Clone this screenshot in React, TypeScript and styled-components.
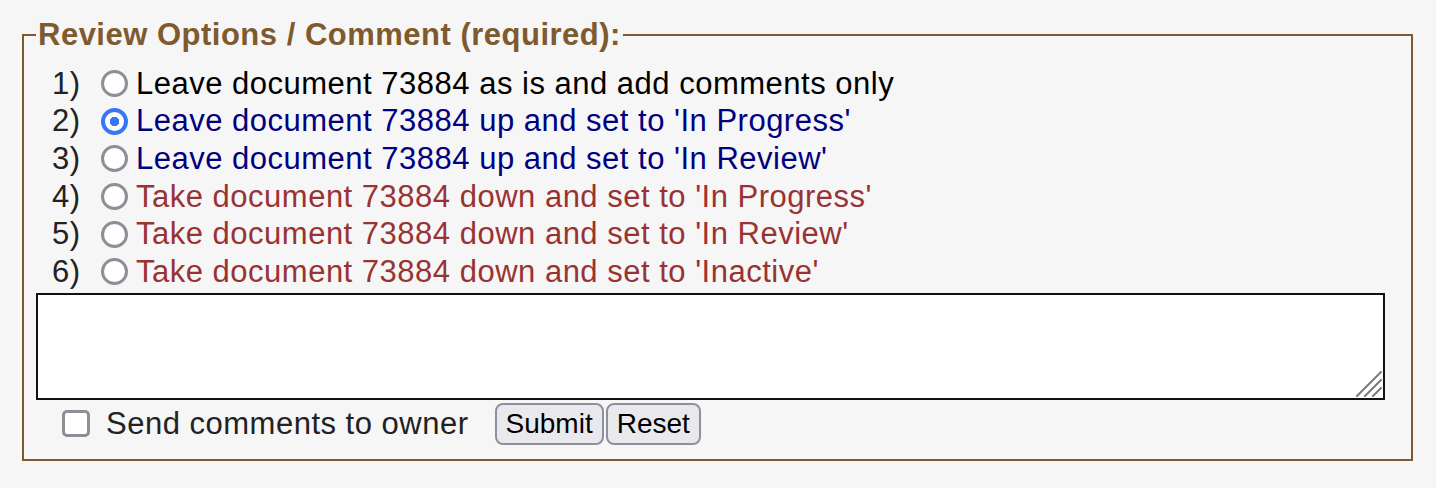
import { useState } from "react";
import styled, { createGlobalStyle } from "styled-components";

const GlobalStyle = createGlobalStyle`
  html, body {
    margin: 0;
    padding: 0;
    background: #f6f6f6;
  }
  body {
    font-family: "Liberation Sans", Arial, sans-serif;
  }
`;

const brown = "#7f5a2f";

// diagonal grip drawn in the textarea corner
const grip =
  "data:image/svg+xml," +
  encodeURIComponent(
    '<svg xmlns="http://www.w3.org/2000/svg" width="26" height="26" viewBox="0 0 26 26">' +
      '<g stroke="#7a7a7a" stroke-width="2" stroke-linecap="square">' +
      '<line x1="25" y1="1" x2="1" y2="25"/>' +
      '<line x1="25" y1="9" x2="9" y2="25"/>' +
      '<line x1="25" y1="17" x2="17" y2="25"/>' +
      "</g></svg>"
  );

const Page = styled.div`
  padding: 18px 0 0 22px;
`;

const Box = styled.fieldset`
  box-sizing: border-box;
  width: 1391px;
  margin: 0;
  padding: 13px 26px 14px 12px;
  border: 2px solid ${brown};
`;

const Legend = styled.legend`
  padding: 0 2px;
  font-size: 31px;
  line-height: 34px;
  font-weight: bold;
  letter-spacing: 0.5px;
  color: ${brown};
`;

const Row = styled.label`
  display: flex;
  align-items: center;
  height: 37.6px;
  padding-left: 16px;
  font-size: 31px;
  letter-spacing: 0.5px;
`;

const Num = styled.span`
  width: 49px;
  color: #222;
`;

const Radio = styled.input.attrs({ type: "radio" })`
  appearance: none;
  box-sizing: border-box;
  width: 27px;
  height: 27px;
  margin: 0;
  border: 3px solid #8e8e96;
  border-radius: 50%;
  background: #fff;

  &:checked {
    border: 4px solid #3478f6;
    background: radial-gradient(circle, #3478f6 0 4.5px, #fff 5px);
  }
`;

const OptionText = styled.span<{ $tone: string }>`
  margin-left: 8px;
  color: ${(p) => p.$tone};
`;

const Comment = styled.textarea`
  box-sizing: border-box;
  display: block;
  width: 100%;
  height: 107px;
  margin: 2px 0 0;
  border: 2px solid #111;
  border-radius: 0;
  background: #fff url("${grip}") no-repeat right 1px bottom 1px;
  resize: none;
  font-family: inherit;
  font-size: 26px;
`;

const Actions = styled.div`
  display: flex;
  align-items: center;
  height: 42px;
  margin-top: 3px;
  padding-left: 26px;
`;

const Check = styled.input.attrs({ type: "checkbox" })`
  appearance: none;
  box-sizing: border-box;
  width: 28px;
  height: 27px;
  margin: 0;
  border: 3px solid #8e8e96;
  border-radius: 5px;
  background: #fff;
`;

const CheckLabel = styled.label`
  display: flex;
  align-items: center;
  gap: 16px;
  font-size: 31px;
  letter-spacing: 0.5px;
  color: #222;
`;

const Buttons = styled.div`
  display: flex;
  gap: 2px;
  margin-left: 26px;
`;

const Button = styled.button`
  height: 42px;
  padding: 0 9px;
  border: 2px solid #8f8f9d;
  border-radius: 8px;
  background: #e9e9ed;
  color: #000;
  font-family: inherit;
  font-size: 28px;
`;

const options = [
  { text: "Leave document 73884 as is and add comments only", tone: "#000" },
  { text: "Leave document 73884 up and set to 'In Progress'", tone: "#000080" },
  { text: "Leave document 73884 up and set to 'In Review'", tone: "#000080" },
  { text: "Take document 73884 down and set to 'In Progress'", tone: "#993333" },
  { text: "Take document 73884 down and set to 'In Review'", tone: "#993333" },
  { text: "Take document 73884 down and set to 'Inactive'", tone: "#993333" },
];

export default function App() {
  const [choice, setChoice] = useState(1);

  return (
    <Page>
      <GlobalStyle />
      <Box>
        <Legend>Review Options / Comment (required):</Legend>
        {options.map((o, i) => (
          <Row key={i}>
            <Num>{i + 1})</Num>
            <Radio
              name="review"
              checked={choice === i}
              onChange={() => setChoice(i)}
            />
            <OptionText $tone={o.tone}>{o.text}</OptionText>
          </Row>
        ))}
        <Comment />
        <Actions>
          <CheckLabel>
            <Check />
            Send comments to owner
          </CheckLabel>
          <Buttons>
            <Button type="button">Submit</Button>
            <Button type="button">Reset</Button>
          </Buttons>
        </Actions>
      </Box>
    </Page>
  );
}
